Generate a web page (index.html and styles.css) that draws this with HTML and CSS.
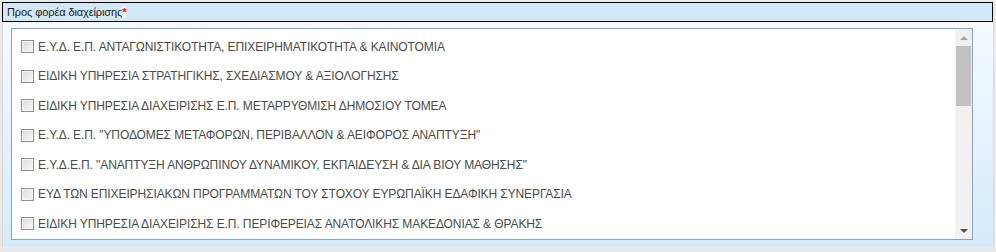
FILE: index.html
```
<!DOCTYPE html>
<html lang="el">
<head>
<meta charset="utf-8">
<link rel="stylesheet" href="styles.css">
</head>
<body>
<div class="page">
  <div class="hdr">Προς φορέα διαχείρισης<span class="req">*</span></div>
  <div class="panel">
    <div class="listbox">
      <div class="items">
        <label class="row"><span class="cb"></span>Ε.Υ.Δ. Ε.Π. ΑΝΤΑΓΩΝΙΣΤΙΚΟΤΗΤΑ, ΕΠΙΧΕΙΡΗΜΑΤΙΚΟΤΗΤΑ &amp; ΚΑΙΝΟΤΟΜΙΑ</label>
        <label class="row"><span class="cb"></span>ΕΙΔΙΚΗ ΥΠΗΡΕΣΙΑ ΣΤΡΑΤΗΓΙΚΗΣ, ΣΧΕΔΙΑΣΜΟΥ &amp; ΑΞΙΟΛΟΓΗΣΗΣ</label>
        <label class="row"><span class="cb"></span>ΕΙΔΙΚΗ ΥΠΗΡΕΣΙΑ ΔΙΑΧΕΙΡΙΣΗΣ Ε.Π. ΜΕΤΑΡΡΥΘΜΙΣΗ ΔΗΜΟΣΙΟΥ ΤΟΜΕΑ</label>
        <label class="row"><span class="cb"></span>Ε.Υ.Δ. Ε.Π. "ΥΠΟΔΟΜΕΣ ΜΕΤΑΦΟΡΩΝ, ΠΕΡΙΒΑΛΛΟΝ &amp; ΑΕΙΦΟΡΟΣ ΑΝΑΠΤΥΞΗ"</label>
        <label class="row"><span class="cb"></span>Ε.Υ.Δ.Ε.Π. "ΑΝΑΠΤΥΞΗ ΑΝΘΡΩΠΙΝΟΥ ΔΥΝΑΜΙΚΟΥ, ΕΚΠΑΙΔΕΥΣΗ &amp; ΔΙΑ ΒΙΟΥ ΜΑΘΗΣΗΣ"</label>
        <label class="row"><span class="cb"></span>ΕΥΔ ΤΩΝ ΕΠΙΧΕΙΡΗΣΙΑΚΩΝ ΠΡΟΓΡΑΜΜΑΤΩΝ ΤΟΥ ΣΤΟΧΟΥ ΕΥΡΩΠΑΪΚΗ ΕΔΑΦΙΚΗ ΣΥΝΕΡΓΑΣΙΑ</label>
        <label class="row"><span class="cb"></span>ΕΙΔΙΚΗ ΥΠΗΡΕΣΙΑ ΔΙΑΧΕΙΡΙΣΗΣ Ε.Π. ΠΕΡΙΦΕΡΕΙΑΣ ΑΝΑΤΟΛΙΚΗΣ ΜΑΚΕΔΟΝΙΑΣ &amp; ΘΡΑΚΗΣ</label>
      </div>
      <div class="sbar">
        <div class="arrow up"></div>
        <div class="track"><div class="thumb"></div></div>
        <div class="arrow down"></div>
      </div>
    </div>
  </div>
</div>
</body>
</html>
```
FILE: styles.css
```
html, body {
  margin: 0;
  padding: 0;
  background: #e9e9e9;
}
body {
  font-family: "Liberation Sans", Arial, sans-serif;
}
.page {
  width: 992px;
  padding: 2px 0 0 2px;
}
.hdr {
  height: 18px;
  width: 985px;
  border: 1px solid #000;
  background: #d3e8f6;
  font-size: 11px;
  line-height: 19px;
  padding-left: 4px;
  color: #1a1a1a;
  letter-spacing: -0.1px;
}
.req {
  color: #e00000;
  background: #fff;
  font-weight: bold;
}
.panel {
  width: 992px;
  height: 225px;
  box-sizing: border-box;
  background: linear-gradient(#f4f9fe, #d5ebfb);
  border-left: 1px solid #d9d9d9;
  border-right: 1px solid #d9d9d9;
  padding: 6px 0 0 8px;
}
.listbox {
  width: 962px;
  height: 212px;
  box-sizing: border-box;
  border: 1px solid #8aa1b8;
  background: #fff;
  display: flex;
}
.items {
  flex: 1;
  padding-top: 3px;
}
.row {
  display: flex;
  align-items: center;
  height: 29.5px;
  padding-left: 9px;
  font-size: 12px;
  letter-spacing: -0.1px;
  color: #4a4a4a;
  white-space: nowrap;
}
.cb {
  width: 11px;
  height: 11px;
  border: 1px solid #8f8f8f;
  background: linear-gradient(135deg, #dcdcdc, #f7f7f7);
  box-shadow: inset 0 0 0 1px #f4f4f4;
  margin-right: 4px;
  flex: none;
}
.sbar {
  width: 17px;
  background: #f0f0f0;
  display: flex;
  flex-direction: column;
}
.arrow {
  height: 17px;
  display: flex;
  align-items: center;
  justify-content: center;
}
.arrow::before {
  content: "";
  border-left: 4px solid transparent;
  border-right: 4px solid transparent;
}
.up::before { border-bottom: 4px solid #a3a3a3; }
.down::before { border-top: 4px solid #505050; }
.track {
  flex: 1;
  padding: 0 1px;
}
.thumb {
  height: 60px;
  background: #c1c1c1;
}
```
